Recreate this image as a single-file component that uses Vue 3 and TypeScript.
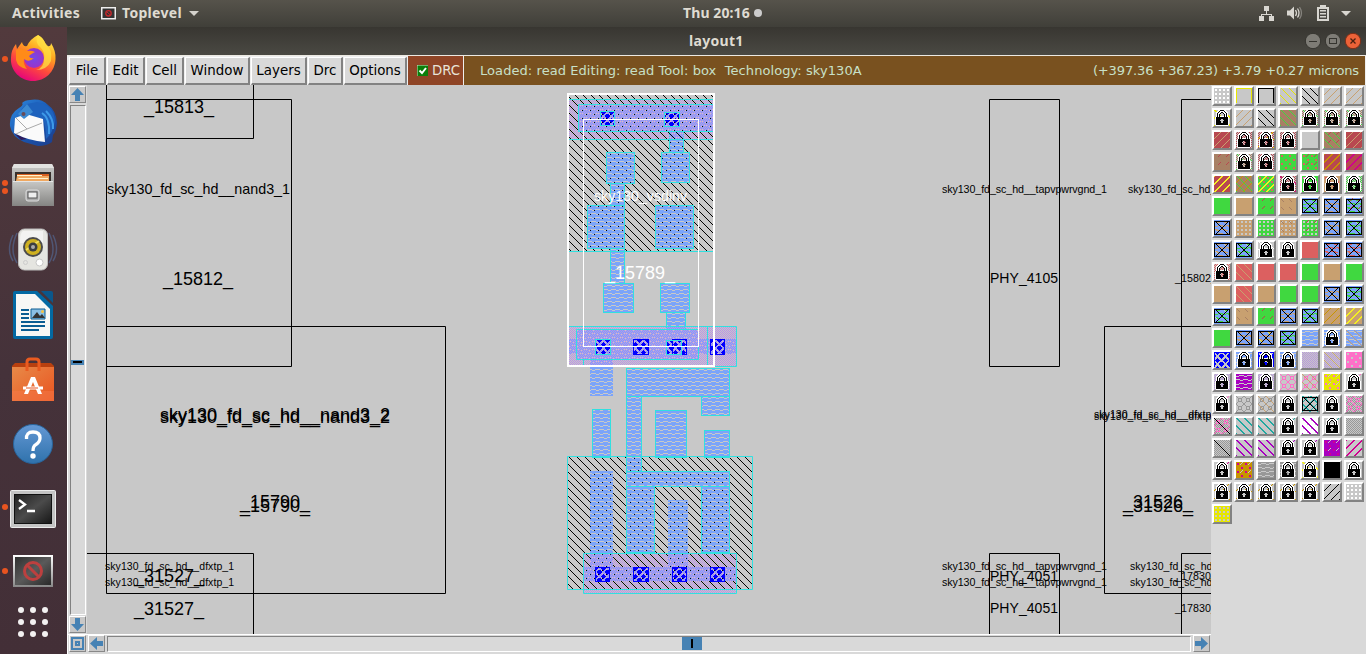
<script setup lang="ts">
interface Box { x: number; y: number; w: number; h: number }
interface Label { t: string; x: number; y: number; len: number; size: number; white?: boolean }
interface Layer { d: string; fill: string }

const colors: Record<string, string> = {
  _: '#c8c8c8', w: '#ffffff', k: '#000000', y: '#e6e600', t: '#c8a070', g: '#40d840', r: '#dc6060',
  R: '#b84850', b: '#7ba4fa', B: '#0000ff', p: '#b898dc', m: '#a800c0', P: '#ff70c8', c: '#20a8a0',
  G: '#989898', n: '#a88064', o: '#c89400', M: '#d00090', Y: '#f4f020',
}

const stipples: Record<string, string[]> = {
  D: ['........', '.##..##.', '.##..##.', '........', '........', '.##..##.', '.##..##.', '........'],
  E: ['........', '.##.....', '.##.....', '........', '........', '.....##.', '.....##.', '........'],
  L: ['#.......', '.#......', '..#.....', '...#....', '....#...', '.....#..', '......#.', '.......#'],
  J: ['.#......', '..#.....', '...#....', '....#...', '.....#..', '......#.', '.......#', '#.......'],
  S: ['......#.', '.....#..', '....#...', '...#....', '..#.....', '.#......', '#.......', '.......#'],
  T: ['##......', '.##.....', '..##....', '...##...', '....##..', '.....##.', '......##', '#......#'],
  F: ['#......#', '......##', '.....##.', '....##..', '...##...', '..##....', '.##.....', '##......'],
  U: ['......#.', '.....#..', '....#...', '........', '........', '........', '........', '........'],
  N: ['........', '.#......', '..#.....', '...#....', '........', '........', '........', '........'],
  C: ['#.#.#.#.', '.#.#.#.#', '#.#.#.#.', '.#.#.#.#', '#.#.#.#.', '.#.#.#.#', '#.#.#.#.', '.#.#.#.#'],
  Q: ['.#.#.#.#', '#.#.#.#.', '.#.#.#.#', '#.#.#.#.', '.#.#.#.#', '#.#.#.#.', '.#.#.#.#', '#.#.#.#.'],
  H: ['########', '###.....', '...#####', '########', '########', '....###.', '####...#', '########'],
  V: ['........', '####...#', '..####..', '........', '........', '#...####', '####..#.', '........'],
  W: ['#......#', '.#....#.', '..####..', '..#..#..', '..#..#..', '..####..', '.#....#.', '#......#'],
  Z: ['.#####..', '..###...', '#..#..##', '##...###', '##...###', '#.....##', '...#...#', '..###...'],
}

function bitmapPath(rows: string[], w: number, h: number, mark = '#'): string {
  let d = ''
  for (let y = 0; y < h; y++) {
    const row = rows[y % rows.length]
    for (let x = 0; x < w; x++) if (row[x % row.length] === mark) d += `M${x} ${y}h1v1h-1z`
  }
  return d
}

const lock = [
  '....wwkkkkww....',
  '...wwkwwwwkww...',
  '..wwkwwkkwwkww..',
  '..wkwwk..kwwkw..',
  '..wkwk....kwkw..',
  '..wkwk....kwkw..',
  '..wkwkwwwwkwkw..',
  '.wkkkkkkkkkkkkw.',
  '.wkkkkkkkkkkkkw.',
  '.wkkkkk..kkkkkw.',
  '.wkkkk....kkkkw.',
  '.wkkkkk..kkkkkw.',
  '.wkkkkk..kkkkkw.',
  '.wkkkkkkkkkkkkw.',
  '.wkkkkkkkkkkkkw.',
  '..wwwwwwwwwwww..',
]

function swatch(code: string): Layer[] {
  const [base, ...layers] = code.split('.')
  const out: Layer[] = [{ d: 'M0 0h16v16h-16z', fill: colors[base] }]
  for (const l of layers) {
    const fill = colors[l[1] ?? 'k']
    if (l[0] === 'K') {
      out.push({ d: bitmapPath(lock, 16, 16, 'w'), fill: '#fff' }, { d: bitmapPath(lock, 16, 16, 'k'), fill: '#000' })
    } else if (l[0] === 'O') out.push({ d: 'M0 0h16v15h-1v-14h-14v14h-1z', fill })
    else if (l[0] === 'X') {
      let d = 'M0 1h16v14h-16zM1 2v12h14v-12z'
      for (let i = 2; i < 14; i++) d += `M${i} ${i}h1v1h-1zM${15 - i} ${i}h1v1h-1z`
      out.push({ d, fill })
    } else if (l[0] === 'I') {
      let d = ''
      for (let i = 0; i < 16; i++) d += `M${i} ${i}h1v1h-1z`
      out.push({ d, fill })
    } else out.push({ d: bitmapPath(stipples[l[0]], 16, 16), fill })
  }
  return out
}

const palette = `
_.Dw _.Oy _.Ok _.Jy _.Lk _.St _.St
_.Ty.K _.St _.Lk n.Jg _.Qn.Jg.K _.Qn.Jg.K _.Qn.Jg.K
R.St _.QR.K _.QR.Sy.K _.QR.K _ n.Jg.UR R.St
n.UR _.Qn.Jg.K _.QR.K g.Er g.Er.UR R.Fo R.FM
R.FY n.Jg.So g.Er.FY _.QR.LM.K g.EP.K t.Er.K _.Qg.K
g t g.UR t.Nn b.Vg.X b.Vt.X b.Vg.UR.X
b.Vt.X t.D_ g.D_ t.D_.Nn g.D_.UR b.Vt.N_.X b.Vg.N_.X
b.Vt.N_.X b.Vg.N_.X _.Jw.K _.K r b.Vr.X b.Vr.Nt.X
_.Qr.K r.Lt r r g t g
t r.Lt t g g b.Vt.X b.Vg.X
b.Vg.N_.X t.Nn g.UR b.Vt.X b.Vg.X t.So t.FY
g b.Vt.X b.Vt.NY.X b.Vg.X _.Hb _.Hb.K _.Hb.Lt
_.ZB.OB _.Hb.K _.ZB.OB.K _.Hb.K _.Cp _.Cp.Lt P.E_
_.Qp.K _.Hm _.Qp.K _.WP _.WP.Lt y.EP.U_ _.UP.K
_.UP.K _.WG _.WG.Lt _.K _.Tc.Sc.X _.K _.CG.WP
_.CG.WP.I _.Tc _.Lt.Tc _.Uc.K w.E_.Tm _.Uc.K _.CG
_.CG.I _.Tm _.Lt.Tm _.Um.K _.Um.K m.EM.U_ _.FM
_.UM.K o.EM.U_ _.HG _.HG.K _.TY.K k _.K
_.So.K _.So.K _.So.K _.So.K _.So.K _.Sk _.Dw
y.D_`.trim().split(/\s+/).map(swatch)

const patterns = [
  { id: 'well', d: bitmapPath(stipples.L, 8, 8), fill: '#000' },
  { id: 'wellgap', d: 'M2 2h1v1h-1zM6 6h1v1h-1z', fill: '#000' },
  { id: 'local', d: bitmapPath(stipples.H, 8, 8), fill: colors.b },
  { id: 'metal', d: bitmapPath(stipples.C, 8, 8), fill: '#bb92e8' },
  { id: 'cut', d: bitmapPath(stipples.Z, 8, 8), fill: '#00f' },
]

const b = (x: number, y: number, x2: number, y2: number): Box => ({ x, y, w: x2 - x, h: y2 - y })

const wells = [b(569, 95, 713, 251), b(568, 457, 752, 589)]
const wellsOverMetal = [
  b(569, 100, 713, 105), b(569, 105, 578, 132), b(569, 132, 713, 139), b(584, 554, 590, 567),
  b(613, 554, 668, 567), b(688, 554, 736, 567), b(584, 581, 736, 589),
]
const wellGaps = [b(579, 105, 713, 131), b(590, 554, 613, 567), b(668, 554, 688, 567), b(584, 567, 736, 581)]
const locals = [
  b(669.5, 131.5, 683.5, 152.5), b(606.5, 152.5, 634.5, 183.5), b(661.5, 152.5, 689.5, 182.5),
  b(610.5, 183.5, 624.5, 205.5), b(587.5, 205.5, 624.5, 248.5), b(610.5, 248.5, 624.5, 283.5),
  b(655.5, 205.5, 693.5, 248.5), b(603.5, 283.5, 633.5, 312.5), b(660.5, 283.5, 689.5, 312.5),
  b(666.5, 312.5, 685.5, 329.5), b(626.5, 368.5, 729.5, 396.5), b(626.5, 396.5, 641.5, 471.5),
  b(701.5, 396.5, 729.5, 415.5), b(592.5, 409.5, 610.5, 457.5), b(655.5, 410.5, 686.5, 457.5),
  b(704.5, 430.5, 729.5, 457.5), b(626.5, 471.5, 729.5, 486.5), b(626.5, 486.5, 654.5, 552.5),
  b(701.5, 486.5, 729.5, 552.5),
]
const plainLocals = [
  b(590, 360, 613, 396), b(590, 471, 613, 567), b(668, 500, 688, 567),
  b(584, 567, 736, 581), b(568, 339, 736, 354), b(579, 105, 713, 131), b(577, 330, 698, 359),
]
const metals = [b(569, 100, 713, 139), b(568, 327, 736, 366), b(584, 554, 736, 593)]
const cyanLines = [
  'M569 99.5H713', 'M569 139.5H713', 'M569 251.5H713', 'M713 104.5H578.5V131.5H713',
  'M568 326.5H736.5V366.5H715', 'M576.5 329.5H698.5V359.5H576.5Z', 'M707.5 327V366', 'M583.5 360V366',
  'M583.5 553.5H736.5V593.5H583.5Z', 'M567.5 456.5H752.5V589.5H567.5Z',
]
const cuts = [
  { ...b(600.5, 111.5, 614.5, 125.5), c: '#30e0e0' }, { ...b(664.5, 112.5, 679.5, 126.5), c: '#30e0e0' },
  { ...b(595.5, 339.5, 610.5, 354.5), c: '#30e0e0' }, { ...b(633.5, 339.5, 648.5, 354.5), c: '#00f' },
  { ...b(672.5, 339.5, 686.5, 354.5), c: '#00f' }, { ...b(666.5, 340.5, 681.5, 354.5), c: '#30e0e0' },
  { ...b(710.5, 339.5, 724.5, 354.5), c: '#00f' },
  { ...b(595.5, 567.5, 609.5, 581.5), c: '#00f' }, { ...b(633.5, 567.5, 648.5, 581.5), c: '#00f' },
  { ...b(672.5, 567.5, 686.5, 581.5), c: '#00f' }, { ...b(710.5, 567.5, 724.5, 581.5), c: '#00f' },
]
const outlines = [
  'M106.5 85V366.5H291.5V99.5H106.5', 'M253.5 85V138.5H106.5', 'M106.5 326.5H445.5V593.5H106.5Z',
  'M87 553.5H253.5V634', 'M989.5 99.5H1059.5V366.5H989.5Z', 'M989.5 634V553.5H1059.5V634',
  'M1211 99.5H1181.5V366.5H1211', 'M1211 553.5H1181.5V634', 'M1211 326.5H1104.5V593.5H1211',
]
const TAP = 'sky130_fd_sc_hd__tapvpwrvgnd_1'
const DFX = 'sky130_fd_sc_hd__dfxtp_1'
const labels: Label[] = [
  { t: '_15813_', x: 144, y: 113, len: 70, size: 18 },
  { t: 'sky130_fd_sc_hd__nand3_1', x: 107, y: 194, len: 183, size: 14.3 },
  { t: '_15812_', x: 163, y: 285, len: 70, size: 18 },
  { t: 'sky130_fd_sc_hd__nand3_2', x: 160, y: 421, len: 230, size: 18 },
  { t: 'sky130_fd_sc_hd__nand3_2', x: 160, y: 423, len: 230, size: 18 },
  { t: '_15790_', x: 240, y: 508, len: 70, size: 18 },
  { t: '_15790_', x: 240, y: 512, len: 70, size: 18 },
  { t: DFX, x: 105, y: 570, len: 129, size: 10.5 },
  { t: DFX, x: 105, y: 586, len: 129, size: 10.5 },
  { t: '_31527_', x: 134, y: 582, len: 70, size: 18 },
  { t: '_31527_', x: 134, y: 615, len: 70, size: 18 },
  { t: TAP, x: 942, y: 193, len: 165, size: 10.7 },
  { t: TAP, x: 942, y: 570, len: 165, size: 10.7 },
  { t: TAP, x: 942, y: 586, len: 165, size: 10.7 },
  { t: 'PHY_4105', x: 990, y: 283, len: 68, size: 14 },
  { t: 'PHY_4051', x: 990, y: 581, len: 68, size: 14 },
  { t: 'PHY_4051', x: 990, y: 613, len: 68, size: 14 },
  { t: DFX, x: 1128, y: 193, len: 129, size: 10.5 },
  { t: DFX, x: 1130, y: 570, len: 129, size: 10.5 },
  { t: DFX, x: 1130, y: 586, len: 129, size: 10.5 },
  { t: DFX, x: 1094, y: 418, len: 129, size: 10.5 },
  { t: DFX, x: 1094, y: 420, len: 129, size: 10.5 },
  { t: '_15802_', x: 1175, y: 282, len: 42, size: 10.7 },
  { t: '_17830_', x: 1175, y: 580, len: 42, size: 10.7 },
  { t: '_17830_', x: 1175, y: 612, len: 42, size: 10.7 },
  { t: '_31526_', x: 1123, y: 508, len: 70, size: 18 },
  { t: '_31526_', x: 1123, y: 512, len: 70, size: 18 },
  { t: 'sky130_vsdinv', x: 594, y: 201, len: 93, size: 14, white: true },
  { t: '_15789_', x: 605, y: 279, len: 70, size: 18, white: true },
]

const menus = ['File', 'Edit', 'Cell', 'Window', 'Layers', 'Drc', 'Options']
</script>

<template>
  <div class="desktop">
    <header class="topbar">
      <span class="activities">Activities</span>
      <svg class="appicon" width="15" height="13" viewBox="0 0 15 13"><rect x=".75" y=".75" width="13.5" height="11" fill="#333" stroke="#eee" stroke-width="1.5" /><circle cx="7.5" cy="6.3" r="2.7" fill="none" stroke="#c4282c" stroke-width="1.4" /><path d="M5.5 4.5L9.5 8.2" stroke="#c4282c" /></svg>
      <span class="toplevel">Toplevel</span>
      <i class="caret"></i>
      <span class="clock">Thu 20:16<i></i></span>
      <svg class="tray" width="100" height="20" viewBox="0 0 100 20" fill="#d8d6d0">
        <path d="M9 3h5v5H9zM4 13h5v5H4zM14 13h5v5h-5zM11 8h1v3h5v2h-1v-1H7v1H6v-2h5z" />
        <path d="M32 7.500h3l4-4v13l-4-4h-3z" /><path d="M40.500 7q2 3 0 6M42.500 5.500q3 4.500 0 9" fill="none" stroke="#d8d6d0" stroke-width="1.300" /><path d="M44.500 4q4 6 0 12" fill="none" stroke="#85837d" stroke-width="1.300" />
        <path d="M65 2h6v2h3v14H62V4h3z" /><path d="M64 6h8v10h-8z" fill="#4a4843" /><path d="M65 7h6v1.500h-6zM65 10h6v1.500h-6zM65 13h6v1.500h-6z" />
        <path d="M86 8h10l-5 5z" />
      </svg>
    </header>
    <div class="work">
      <nav class="dock">
        <div class="item"><i class="dot"></i>
          <svg width="48" height="48" viewBox="0 0 48 48">
            <defs>
              <linearGradient id="fx" x1=".8" y1="0" x2=".3" y2="1"><stop offset="0" stop-color="#fff44f" /><stop offset=".35" stop-color="#ffa51f" /><stop offset=".65" stop-color="#ff4a3c" /><stop offset="1" stop-color="#e4007f" /></linearGradient>
              <radialGradient id="fp"><stop offset="0" stop-color="#7448e8" /><stop offset="1" stop-color="#9a34c8" /></radialGradient>
            </defs>
            <path d="M29 1C35 4 36 9 38 12Q42 13 42 9Q47 17 46.500 25C46 38 36 47 24 47S1 37 2 24Q2 16 7 10L8 15L13 8Q14 13 18 12Q21 5 29 1Z" fill="url(#fx)" />
            <circle cx="25" cy="24" r="10" fill="url(#fp)" />
            <path d="M7 16Q13 13 18 17Q22 16 26 18Q22 20 20 22Q21 25 25 24Q20 29 15 25Q14 30 18 35Q9 34 7 26Z" fill="#ff8b18" />
            <path d="M29 1Q25 9 32 14Q36 18 35 25Q35 34 27 36Q38 36 42 27Q44 15 36 9Q34 4 29 1Z" fill="#ffe044" opacity=".75" />
          </svg></div>
        <div class="item">
          <svg width="48" height="48" viewBox="0 0 48 48">
            <defs><linearGradient id="tb" x1="0" y1="0" x2="1" y2="1"><stop offset="0" stop-color="#2f8be0" /><stop offset=".5" stop-color="#1a58b4" /><stop offset="1" stop-color="#1d3c88" /></linearGradient></defs>
            <path d="M21 1Q32 -1 39 6Q47 11 48 24Q47 33 44 36L43 43Q38 47 29 47L15 43Q3 38 1 27Q0 15 10 9Q15 6 13 4Q16 1 21 1Z" fill="url(#tb)" />
            <path d="M5 34L18 40L12 41Z" fill="#2c1a5c" />
            <path d="M28 3Q45 6 46 22Q44 34 37 40Q37 27 34 20Q24 17 14 21L11 17Q11 9 18 5Z" fill="#1e62bd" />
            <path d="M6 19L17 15L34 20L36 43Q20 42 5 34Z" fill="#fafafa" /><path d="M7 19L18 30L33 24M18 30L7 35" fill="none" stroke="#aaa" />
            <path d="M33 14Q41 19 40 35M37 12Q45 20 44 30" fill="none" stroke="#3e9ae8" stroke-width="2" />
            <path d="M18 5L9 15L15 20L24 13Z" fill="#3c8ad2" /><circle cx="14.500" cy="15" r="2" fill="#684c58" />
          </svg></div>
        <div class="item"><i class="dot up"></i><i class="dot down"></i>
          <svg width="48" height="48" viewBox="0 0 48 48">
            <defs><linearGradient id="fc" x1="0" y1="0" x2="0" y2="1"><stop offset="0" stop-color="#c8c8c6" /><stop offset="1" stop-color="#848482" /></linearGradient></defs>
            <path d="M5 2H43L45 6V44H3V6Z" fill="url(#fc)" /><path d="M5 2H43L45 6H3Z" fill="#e2e2e0" />
            <path d="M6 10H42V20H6Z" fill="#38302c" /><path d="M8 12H40V17H8Z" fill="#d86020" /><path d="M8 14H40V19H7Z" fill="#f0a860" /><path d="M8 13h25v1H8zM10 16h29v1H9z" fill="#fff3cf" />
            <path d="M4 19H44V44H4Z" fill="url(#fc)" /><path d="M4 19h40v1H4z" fill="#e5e5e5" /><rect x="17" y="28" width="13" height="11" rx="2" fill="#aaa" stroke="#ddd" /><rect x="19" y="30" width="9" height="6" fill="#eee" stroke="#555" />
          </svg></div>
        <div class="item">
          <svg width="50" height="48" viewBox="0 0 50 48">
            <path d="M9 7Q1 24 9 37M5 9Q-2 24 5 35M41 7Q49 24 41 37M45 9Q52 24 45 35" stroke="#505674" stroke-width="1.500" fill="none" />
            <rect x="10.500" y="3" width="29" height="41" rx="6" fill="#e5e5e1" stroke="#bbb" /><path d="M15 5h20v12H12Q12 6 15 5Z" fill="#fafafa" opacity=".7" />
            <circle cx="25" cy="21" r="10" fill="#4c4c4c" /><circle cx="25" cy="21" r="8" fill="#ceb020" /><path d="M18 24L31 15" stroke="#fff37a" stroke-width="2" opacity=".7" /><circle cx="25" cy="21" r="4.500" fill="#3c3e40" /><circle cx="25" cy="21" r="2" fill="#aaa" />
            <circle cx="31.500" cy="36.500" r="3.500" fill="#fff" stroke="#c8c8c8" /><circle cx="17.500" cy="36.500" r="2" fill="none" stroke="#ccc" />
          </svg></div>
        <div class="item">
          <svg width="40" height="48" viewBox="0 0 40 48">
            <path d="M2 0H24L40 15V46Q40 48 38 48H2Q0 48 0 46V2Q0 0 2 0Z" fill="#0369a3" /><path d="M3 3H22L37 18V45H3Z" fill="#f7f7f5" /><path d="M28 0H38Q40 0 40 2V12Z" fill="#0b578b" />
            <path d="M8 18h8v2H8zM8 22h8v2H8zM8 26h8v2H8zM8 30h24v2H8zM8 34h24v2H8zM8 38h18v2H8z" fill="#0a5c92" /><path d="M18 18h14v10H18z" fill="#8abfe4" stroke="#0a5c92" /><path d="M19 27l5-6 3 4 2-2 3 4z" fill="#333" /><circle cx="29.500" cy="20.500" r="1.500" fill="#f5c242" />
          </svg></div>
        <div class="item">
          <svg width="44" height="46" viewBox="0 0 44 46">
            <defs><linearGradient id="sw" x1="0" y1="0" x2="1" y2="1"><stop offset="0" stop-color="#e88a48" /><stop offset="1" stop-color="#e95420" /></linearGradient></defs>
            <path d="M1 9L4 6H40L43 9V16H1Z" fill="#b8400f" /><path d="M1 10H43V44H1Z" fill="url(#sw)" /><path d="M16 14V5Q16 2 19 2H25Q28 2 28 5V14" fill="none" stroke="#ea5b20" stroke-width="3" /><path d="M1 34h42v10H1z" fill="#f5794a" opacity=".5" />
            <path d="M13 37L20 20H24L31 37H27L22 25L17 37Z" fill="#fff" /><path d="M12 29.500H32V32.500H12Z" fill="#fff" /><path d="M15 30.500h12v1H15z" fill="#e95420" />
          </svg></div>
        <div class="item">
          <svg width="42" height="42" viewBox="0 0 42 42">
            <defs><linearGradient id="hp" x1="0" y1="0" x2="0" y2="1"><stop offset="0" stop-color="#6498d4" /><stop offset="1" stop-color="#2f72ac" /></linearGradient></defs>
            <circle cx="21" cy="21" r="19.500" fill="url(#hp)" stroke="#28649b" /><path d="M14.500 16Q14 9 21 9Q28 9 28 15Q28 19 24 21.500Q21 23 21 28" fill="none" stroke="#fff" stroke-width="3.300" /><circle cx="21" cy="33" r="2.700" fill="#fff" />
          </svg></div>
        <div class="item"><i class="dot"></i>
          <svg width="46" height="38" viewBox="0 0 46 38">
            <defs><linearGradient id="tm" x1="0" y1="0" x2="1" y2="1"><stop offset="0" stop-color="#222" /><stop offset=".5" stop-color="#4b4b4b" /><stop offset="1" stop-color="#181818" /></linearGradient></defs>
            <rect x=".5" y=".5" width="45" height="37" rx="1" fill="#c4c4c4" stroke="#ececec" /><rect x="4" y="4" width="38" height="30" fill="#111" /><rect x="5" y="5" width="36" height="28" fill="url(#tm)" /><path d="M9 10L15 14.500L9 19M17 21H25" fill="none" stroke="#fff" stroke-width="2.300" />
          </svg></div>
        <div class="item"><i class="dot"></i>
          <svg width="40" height="32" viewBox="0 0 40 32">
            <defs><linearGradient id="tl" x1="0" y1="0" x2="1" y2="1"><stop offset="0" stop-color="#303030" /><stop offset=".5" stop-color="#5a5a5a" /><stop offset="1" stop-color="#292929" /></linearGradient><linearGradient id="tf" x1="0" y1="0" x2="0" y2="1"><stop offset="0" stop-color="#fff" /><stop offset="1" stop-color="#888" /></linearGradient></defs>
            <rect width="40" height="32" fill="url(#tf)" /><rect x="2" y="2" width="36" height="28" fill="url(#tl)" /><circle cx="20" cy="16" r="8.500" fill="none" stroke="#bc403f" stroke-width="3" /><path d="M14 10L26 22" stroke="#bc403f" stroke-width="3" />
          </svg></div>
        <div class="apps"><i v-for="n in 9" :key="n"></i></div>
      </nav>
      <main class="window">
        <div class="title">
          <span>layout1</span>
          <svg width="60" height="20" viewBox="0 0 60 20">
            <circle cx="10" cy="10" r="7.700" fill="#7e7c76" stroke="#35342f" /><path d="M6 10.500h8" stroke="#35342f" />
            <circle cx="30" cy="10" r="7.700" fill="#7e7c76" stroke="#35342f" /><rect x="26.500" y="7.500" width="7" height="5" fill="none" stroke="#35342f" />
            <circle cx="50" cy="10" r="7.700" fill="#ec6238" stroke="#7a2e17" /><path d="M47.500 7.500l5 5m0-5l-5 5" stroke="#4a2010" stroke-width="1.300" />
          </svg>
        </div>
        <div class="menubar">
          <button v-for="m in menus" :key="m" :class="['menu', m.toLowerCase() + '-menu']">{{ m }}</button>
          <div class="drccheck"><svg width="11" height="11" viewBox="0 0 11 11"><path d="M0 0h11v11H0z" fill="#0a7f0a" /><path d="M0 11V0h11" stroke="#cfe5c8" fill="none" /><path d="M2.500 5.500l2.500 2.500l4-5" stroke="#fff" stroke-width="2" fill="none" /></svg><span>DRC</span></div>
          <div class="status"><span class="loaded">Loaded: read Editing: read Tool: box&nbsp; Technology: sky130A</span><span class="coords">(+397.36 +367.23) +3.79 +0.27 microns</span></div>
        </div>
        <div class="body">
          <div class="left">
            <div class="vbar">
              <div class="arrow"><svg width="13" height="13" viewBox="0 0 13 13"><path d="M6.500 0L13 7H9V13H4V7H0Z" /></svg></div>
              <div class="vtrough"><i></i></div>
              <div class="arrow"><svg width="13" height="13" viewBox="0 0 13 13"><path d="M6.500 13L13 6H9V0H4V6H0Z" /></svg></div>
            </div>
            <svg class="canvas" width="1124" height="549" viewBox="87 85 1124 549">
              <defs>
                <pattern v-for="p in patterns" :id="p.id" :key="p.id" width="8" height="8" patternUnits="userSpaceOnUse"><path :d="p.d" :fill="p.fill" shape-rendering="crispEdges" /></pattern>
              </defs>
              <rect v-for="(r, i) in wells" :key="'w' + i" :x="r.x" :y="r.y" :width="r.w" :height="r.h" fill="url(#well)" />
              <rect v-for="(r, i) in plainLocals" :key="'p' + i" :x="r.x" :y="r.y" :width="r.w" :height="r.h" fill="url(#local)" />
              <rect v-for="(r, i) in locals" :key="'l' + i" :x="r.x" :y="r.y" :width="r.w" :height="r.h" fill="url(#local)" stroke="#30e0e0" />
              <rect v-for="(r, i) in metals" :key="'m' + i" :x="r.x" :y="r.y" :width="r.w" :height="r.h" fill="url(#metal)" />
              <rect v-for="(r, i) in wellsOverMetal" :key="'v' + i" :x="r.x" :y="r.y" :width="r.w" :height="r.h" fill="url(#well)" />
              <rect v-for="(r, i) in wellGaps" :key="'g' + i" :x="r.x" :y="r.y" :width="r.w" :height="r.h" fill="url(#wellgap)" />
              <path v-for="(d, i) in cyanLines" :key="'c' + i" :d="d" fill="none" stroke="#30e0e0" />
              <rect v-for="(r, i) in cuts" :key="'k' + i" :x="r.x" :y="r.y" :width="r.w" :height="r.h" fill="url(#cut)" :stroke="r.c" />
              <path v-for="(d, i) in outlines" :key="'o' + i" :d="d" fill="none" stroke="#000" />
              <rect x="583.5" y="119.5" width="115" height="227" fill="none" stroke="#fff" />
              <rect x="568" y="94" width="146" height="272" fill="none" stroke="#fff" stroke-width="2" />
              <text v-for="(l, i) in labels" :key="'t' + i" :x="l.x" :y="l.y" :textLength="l.len" :font-size="l.size" :fill="l.white ? '#fff' : '#000'">{{ l.t }}</text>
            </svg>
            <div class="hbar">
              <div class="arrow corner"><svg width="13" height="13" viewBox="0 0 13 13"><path d="M0 0h13v13H0zM2 2v9h9V2zM4 4h5v5H4zM6 6v1h1V6z" fill-rule="evenodd" /></svg></div>
              <div class="arrow"><svg width="13" height="13" viewBox="0 0 13 13"><path d="M0 6.500L7 0V4H13V9H7V13Z" /></svg></div>
              <div class="htrough"><i></i></div>
              <div class="arrow"><svg width="13" height="13" viewBox="0 0 13 13"><path d="M13 6.500L6 0V4H0V9H6V13Z" /></svg></div>
            </div>
          </div>
          <div class="palette">
            <div v-for="(s, i) in palette" :key="i" class="swatch"><svg width="16" height="16" viewBox="0 0 16 16" shape-rendering="crispEdges"><path v-for="(l, j) in s" :key="j" :d="l.d" :fill="l.fill" fill-rule="evenodd" /></svg></div>
          </div>
        </div>
      </main>
    </div>
  </div>
</template>

<style>
body { margin: 0; overflow: hidden; }
</style>

<style scoped>
* { box-sizing: border-box; }
svg { display: block; flex: none; }
.desktop { width: 1366px; height: 654px; display: flex; flex-direction: column; overflow: hidden; background: #4b353a; font-family: "DejaVu Sans", sans-serif; }
.topbar { height: 27px; flex: none; display: flex; align-items: center; background: linear-gradient(#56534b, #403f39); color: #dfdbd2; font: 700 14px/24px "Noto Sans", sans-serif; padding-bottom: 1px; }
.activities { width: 69px; margin-left: 12px; white-space: nowrap; letter-spacing: .3px; }
.appicon { margin-left: 20px; }
.toplevel { margin-left: 6px; width: 62px; letter-spacing: .3px; }
.caret { border: 5px solid transparent; border-top-color: #d4d2cc; border-bottom: 0; margin-left: 5px; }
.clock { margin-left: 484px; display: flex; align-items: center; width: 90px; white-space: nowrap; letter-spacing: .1px; }
.clock i { width: 8px; height: 8px; border-radius: 50%; background: #ccc; margin-left: 4px; }
.tray { margin-left: auto; margin-right: 11px; }
.work { display: flex; height: 627px; }
.dock { width: 67px; flex: none; background: linear-gradient(#523a3d, #45323a 55%, #432f37); display: flex; flex-direction: column; }
.item { height: 64px; flex: none; display: flex; align-items: center; justify-content: center; position: relative; padding: 0 2px 2px 0; }
.item:nth-child(2), .item:nth-child(5) { padding-bottom: 0; }
.item:nth-child(6), .item:nth-child(7) { padding-bottom: 0; padding-top: 2px; }
.item:nth-child(8) { padding-bottom: 0; padding-top: 3px; }
.item:nth-child(9) { padding-bottom: 0; }
.dot { position: absolute; left: 2px; top: 29px; width: 6px; height: 6px; border-radius: 50%; background: #e95420; }
.dot.up { top: 25px; }
.dot.down { top: 33px; }
.apps { display: grid; grid-template-columns: repeat(3, 6px); gap: 6px; margin: 4px 0 0 18px; }
.apps i { width: 6px; height: 6px; border-radius: 50%; background: #f3f1f1; }
.window { width: 1299px; display: flex; flex-direction: column; background: #d9d9d9; }
.title { height: 28px; flex: none; display: flex; align-items: center; background: linear-gradient(#383631, #4a4943); color: #dfdbd2; font: 700 14px/25px "Noto Sans", sans-serif; padding-bottom: 1px; letter-spacing: .3px; }
.title span { margin-left: 622px; width: 60px; }
.title svg { margin-left: auto; margin-right: 3px; }
.menubar { height: 30px; flex: none; display: flex; gap: 1px; border-top: 1px solid #ece9e2; padding-left: 2px; padding-right: 1px; background: #eee; }
.menu { height: 28px; margin: 1px 0 0; padding: 0 0 1px; border: 2px solid; border-color: #fff #828282 #828282 #fff; border-left-width: 1px; border-top-width: 1px; background: #d9d9d9; font: 13.400px "DejaVu Sans", sans-serif; color: #000; white-space: nowrap; }
.file-menu { width: 37px; }
.edit-menu, .cell-menu { width: 38px; }
.window-menu { width: 65px; }
.layers-menu { width: 56px; }
.drc-menu { width: 35px; }
.options-menu { width: 63px; }
.drccheck { width: 55px; height: 29px; background: #8f4526; color: #e8e4d8; font-size: 13.300px; display: flex; align-items: center; padding-left: 9px; gap: 4px; }
.status { flex: 1; background: #79511f; color: #c8e0c8; display: flex; justify-content: space-between; align-items: center; padding: 0 6px 0 16px; font-size: 13px; white-space: nowrap; }
.loaded { letter-spacing: .07px; }
.coords { letter-spacing: -.12px; }
.body { display: flex; height: 569px; }
.left { width: 1144px; display: grid; grid-template-columns: 20px 1124px; grid-template-rows: 549px 20px; }
.vbar { display: flex; flex-direction: column; justify-content: space-between; padding: 1px 2px 1px 1px; border-left: 1px solid #fff; background: #d9d9d9; }
.arrow { width: 17px; height: 17px; flex: none; display: flex; align-items: center; justify-content: center; background: #c8c8c8; border: 1px solid; border-color: #fff #888 #888 #fff; }
.arrow path { fill: #4682b4; }
.vtrough { width: 16px; height: 510px; flex: none; border: 1px solid; border-color: #828282 #fff #fff #828282; position: relative; margin-left: 1px; }
.vtrough i { position: absolute; left: 0; top: 254px; width: 13px; height: 5px; background: linear-gradient(#000, #000) center / 9px 2px no-repeat #4682b4; }
.canvas { background: #c8c8c8; font-family: "Liberation Sans", Arial, sans-serif; }
.hbar { grid-column: 1 / 3; display: flex; align-items: center; border-left: 1px solid #fff; border-top: 1px solid #fff; background: #d9d9d9; padding: 0 1px 2px 1px; gap: 2px; }
.htrough { flex: 1; height: 16px; border: 1px solid; border-color: #828282 #fff #fff #828282; position: relative; }
.htrough i { position: absolute; left: 574px; top: 0; width: 20px; height: 13px; background: linear-gradient(#000, #000) center / 2px 9px no-repeat #4682b4; }
.palette { width: 155px; display: grid; grid-template-columns: repeat(7, 20px); grid-auto-rows: 20px; gap: 2px; align-content: start; padding: 1px 0 0 1px; background: #d9d9d9; }
.swatch { width: 20px; height: 20px; border: 2px solid; border-color: #fff #828282 #828282 #fff; }
</style>
